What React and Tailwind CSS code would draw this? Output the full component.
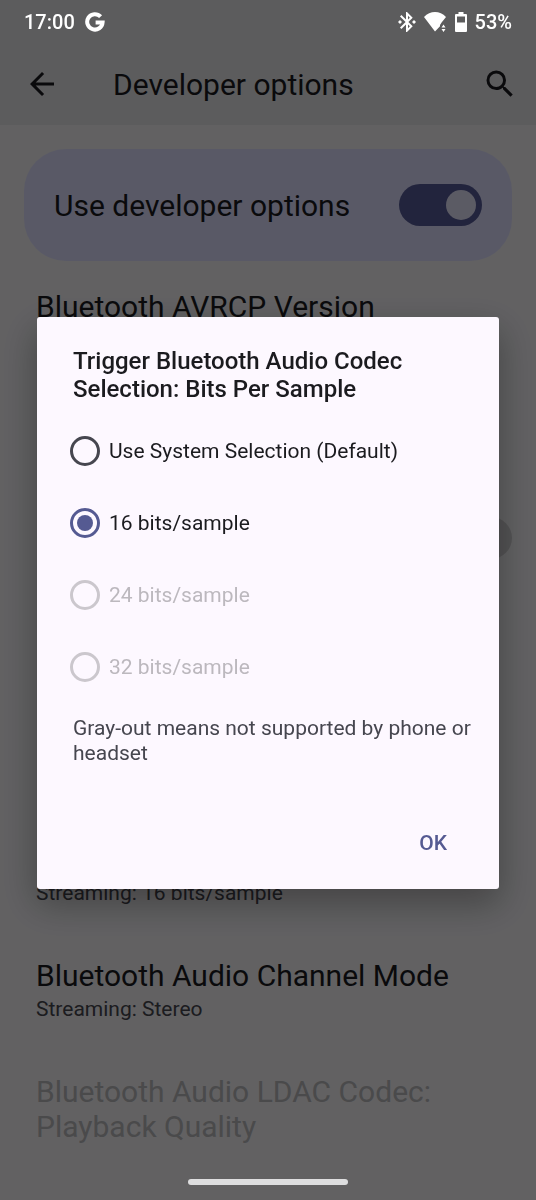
import React, { useState } from "react";
import { MdArrowBack, MdBluetoothConnected, MdSearch } from "react-icons/md";

const OPTIONS = [
  { value: "default", label: "Use System Selection (Default)" },
  { value: "16", label: "16 bits/sample" },
  { value: "24", label: "24 bits/sample", disabled: true },
  { value: "32", label: "32 bits/sample", disabled: true },
];

const StatusBar = () => (
  <div className="relative z-20 flex h-11 items-center justify-between px-6 text-xl font-medium text-white">
    <div className="flex items-center gap-2.5">
      <span>17:00</span>
      <svg viewBox="0 0 20 20" className="size-5" fill="none" stroke="currentColor" strokeWidth="4">
        <path d="M15.6 4.7A7.7 7.7 0 1 0 17.6 10.4H10.6" />
      </svg>
    </div>
    <div className="flex items-center">
      <MdBluetoothConnected className="size-6" />
      <svg viewBox="0 0 24 22" className="ml-1 h-[22px] w-6" fill="currentColor">
        <path d="M1 6C7-.6 17-.6 23 6L18.6 11.6 17 14v1.2l-5 5.4Z" />
        <path d="M20.5 13.5l2 3h-4zM20.5 21l2-3h-4z" />
      </svg>
      <svg viewBox="0 0 12 20" className="ml-2 h-5 w-3" fill="currentColor" fillRule="evenodd">
        <path d="M3.5 0h5v2H11a1 1 0 0 1 1 1v16a1 1 0 0 1-1 1H1a1 1 0 0 1-1-1V3a1 1 0 0 1 1-1h2.5zM2 4.5v6h8v-6z" />
      </svg>
      <span className="ml-2">53%</span>
    </div>
  </div>
);

const Preference = ({ title, summary, disabled }) => (
  <div className={disabled ? "text-[#b9b8bb]" : "text-[#1b1b1f]"}>
    <h2 className="text-[30px] leading-[35px]">{title}</h2>
    {summary && (
      <p className="text-[21px] leading-8 text-[#46464f]">{summary}</p>
    )}
  </div>
);

const CodecDialog = ({ onClose }) => {
  const [selected, setSelected] = useState("16");

  return (
    <div className="fixed inset-0 z-10 flex items-center justify-center bg-black/60 px-[37px] pt-1.5">
      <div
        role="dialog"
        aria-modal="true"
        aria-labelledby="dialog-title"
        className="w-full rounded-[3px] bg-[#fdf8ff] pt-[30px] pb-[21px] shadow-[0_14px_36px_2px_rgba(0,0,0,0.3)]"
      >
        <h2 id="dialog-title" className="px-9 text-2xl leading-7 font-medium text-[#1b1b1f]">
          Trigger Bluetooth Audio Codec Selection: Bits Per Sample
        </h2>

        {/* Options */}
        <div role="radiogroup" aria-labelledby="dialog-title" className="mt-3 px-[33px]">
          {OPTIONS.map((option) => (
            <label
              key={option.value}
              className="flex h-[72px] items-center gap-[9px] text-[21px] text-[#1b1b1f] has-disabled:text-[#bcb8be]"
            >
              <input
                type="radio"
                name="bits"
                value={option.value}
                disabled={option.disabled}
                checked={selected === option.value}
                onChange={() => setSelected(option.value)}
                className="flex size-[30px] shrink-0 appearance-none items-center justify-center rounded-full border-3 border-[#46464f] checked:border-[#555a92] checked:before:size-4 checked:before:rounded-full checked:before:bg-[#555a92] disabled:border-[#cbc7cd]"
              />
              <span className="pt-0.5">{option.label}</span>
            </label>
          ))}
        </div>

        <p className="mt-[13px] px-9 pr-7 text-[21px] leading-[25px] text-[#46464f]">
          Gray-out means not supported by phone or headset
        </p>

        {/* Actions */}
        <div className="mt-[54px] flex justify-end px-8">
          <button
            type="button"
            onClick={onClose}
            className="h-12 px-5 text-[21px] font-medium text-[#555a92]"
          >
            OK
          </button>
        </div>
      </div>
    </div>
  );
};

const App = () => {
  const [enabled, setEnabled] = useState(true);
  const [open, setOpen] = useState(true);

  return (
    <div className="min-h-screen overflow-hidden bg-[#f4f3f6] font-[Roboto,sans-serif] text-[#1b1b1f]">
      <header className="bg-[#e6e5e8] pb-px">
        <StatusBar />
        <div className="flex h-20 items-center pr-[18px] pl-6">
          <button type="button" aria-label="Back">
            <MdArrowBack className="size-9" />
          </button>
          <h1 className="ml-[53px] flex-1 text-[30px]">Developer options</h1>
          <button type="button" aria-label="Search">
            <MdSearch className="size-9" />
          </button>
        </div>
      </header>

      <main>
        <label className="mx-6 mt-6 flex h-28 items-center justify-between rounded-[42px] bg-[#dfdfff] px-[30px] text-[30px]">
          Use developer options
          <input
            type="checkbox"
            role="switch"
            checked={enabled}
            onChange={(e) => setEnabled(e.target.checked)}
            className="flex h-[42px] w-[83px] appearance-none items-center rounded-full bg-[#8b8b95] px-1.5 before:size-[30px] before:rounded-full before:bg-[#e4e3fb] checked:justify-end checked:bg-[#555a98]"
          />
        </label>

        <div className="px-9 pt-7">
          <Preference title="Bluetooth AVRCP Version" />
        </div>

        <div className="flex justify-end px-6 pt-[193px] pb-[318px]">
          <input
            type="checkbox"
            role="switch"
            aria-label="Bluetooth option"
            disabled
            className="h-[42px] w-[83px] appearance-none rounded-full bg-[#d0cfd2]"
          />
        </div>

        <div className="flex flex-col gap-[49px] px-9">
          <p className="text-[21px] leading-8 text-[#46464f]">Streaming: 16 bits/sample</p>
          <Preference title="Bluetooth Audio Channel Mode" summary="Streaming: Stereo" />
          <Preference title="Bluetooth Audio LDAC Codec: Playback Quality" disabled />
        </div>
      </main>

      {open && <CodecDialog onClose={() => setOpen(false)} />}

      {/* Gesture bar */}
      <div className="fixed inset-x-0 bottom-[15px] z-20 mx-auto h-1.5 w-[30%] rounded-full bg-[#dededf]" />
    </div>
  );
};

export default App;
